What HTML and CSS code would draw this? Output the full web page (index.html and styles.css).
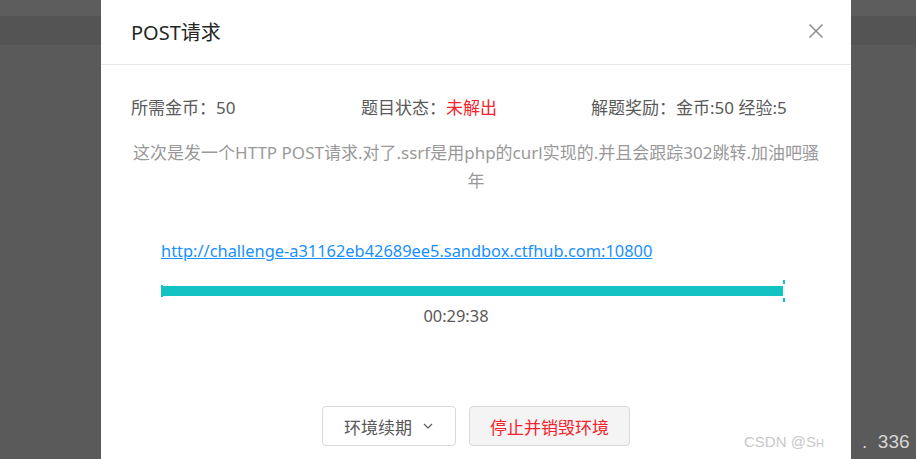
FILE: index.html
```html
<!DOCTYPE html>
<html lang="zh-CN">
<head>
    <meta charset="UTF-8">
    <meta name="viewport" content="width=device-width, initial-scale=1.0">
    <title>POST请求</title>
    <link rel="stylesheet" href="styles.css">
</head>
<body>
    <div class="page-bg">
        <div class="page-top"></div>
        <div class="page-bar"></div>
    </div>

    <div class="modal">
        <div class="modal-header">
            <span class="modal-title">POST请求</span>
            <span class="modal-close">
                <svg width="16" height="16" viewBox="0 0 16 16"><path d="M1.5 1.5 L14.5 14.5 M14.5 1.5 L1.5 14.5" stroke="#8c8c8c" stroke-width="1.5" fill="none"/></svg>
            </span>
        </div>
        <div class="modal-body">
            <div class="info-row">
                <div class="info-item">所需金币：50</div>
                <div class="info-item">题目状态：<span class="status-red">未解出</span></div>
                <div class="info-item">解题奖励：金币:50 经验:5</div>
            </div>
            <p class="desc">这次是发一个HTTP POST请求.对了.ssrf是用php的curl实现的.并且会跟踪302跳转.加油吧骚年</p>
            <div class="env">
                <a class="env-link" href="#">http://challenge-a31162eb42689ee5.sandbox.ctfhub.com:10800</a>
                <div class="progress">
                    <div class="progress-fill" style="width: 99.6%"></div>
                </div>
                <div class="timer">00:29:38</div>
            </div>
            <div class="actions">
                <button class="btn btn-renew">环境续期
                    <svg width="12" height="12" viewBox="0 0 12 12"><path d="M2 4 L6 8 L10 4" stroke="#595959" stroke-width="1.2" fill="none"/></svg>
                </button>
                <button class="btn btn-stop">停止并销毁环境</button>
            </div>
        </div>
    </div>

    <div class="watermark">CSDN @S<span class="small-caps">H</span></div>
    <div class="corner-text">.&nbsp;&nbsp;336</div>
</body>
</html>
```

FILE: styles.css
```css
* {
    margin: 0;
    padding: 0;
    box-sizing: border-box;
}

body {
    font-family: "Noto Sans", "Noto Sans CJK SC", sans-serif;
    background-color: #5a5a5a;
    height: 459px;
    overflow: hidden;
    position: relative;
}

.page-top {
    height: 16px;
    background-color: #5d5d5d;
}

.page-bar {
    height: 30px;
    background-color: #545454;
    border-bottom: 1px solid #5c5c5c;
}

.modal {
    position: absolute;
    left: 101px;
    top: 0;
    width: 750px;
    height: 480px;
    background-color: #fff;
}

.modal-header {
    height: 65px;
    padding: 0 27px 0 30px;
    border-bottom: 1px solid #e8e8e8;
    display: flex;
    align-items: center;
    justify-content: space-between;
}

.modal-title {
    font-size: 20px;
    color: #262626;
    font-weight: 400;
    margin-top: -2px;
}

.modal-close {
    display: flex;
    margin-top: -2px;
}

.modal-body {
    padding: 31px 30px 0 30px;
}

.info-row {
    display: flex;
    font-size: 17px;
    line-height: 24px;
    color: #595959;
}

.info-item {
    width: 230px;
}

.status-red {
    color: #f5222d;
}

.desc {
    margin-top: 19px;
    font-size: 17px;
    line-height: 28px;
    color: #999;
    text-align: center;
}

.env {
    padding: 0 36px 0 30px;
    margin-top: 44px;
}

.env-link {
    display: inline-block;
    font-size: 16.4px;
    line-height: 24px;
    color: #1890ff;
    text-decoration: underline;
}

.progress {
    margin-top: 23px;
    height: 10px;
    background-color: #f2f2f2;
    position: relative;
}

.progress-fill {
    height: 100%;
    background-color: #13c2c2;
}

.progress::before,
.progress::after {
    content: "";
    position: absolute;
    width: 2px;
    background-color: #13c2c2;
}

.progress::before {
    left: 0;
    top: -1px;
    height: 12px;
}

.progress::after {
    right: 0;
    top: -6px;
    height: 22px;
    background: linear-gradient(#13c2c2 0 4px, transparent 4px 18px, #13c2c2 18px);
}

.timer {
    margin-top: 8px;
    padding-right: 34px;
    text-align: center;
    font-size: 16.4px;
    line-height: 24px;
    color: #595959;
}

.actions {
    margin-top: 78px;
    display: flex;
    justify-content: center;
    gap: 13px;
}

.btn {
    height: 40px;
    font-family: inherit;
    font-size: 17px;
    border: 1px solid #d9d9d9;
    border-radius: 4px;
    cursor: pointer;
    display: flex;
    align-items: center;
    justify-content: center;
}

.btn-renew {
    width: 134px;
    background-color: #fff;
    color: #595959;
    gap: 10px;
}

.btn-stop {
    width: 161px;
    background-color: #f4f4f4;
    color: #f5222d;
}

.watermark {
    position: absolute;
    left: 744px;
    top: 433px;
    font-family: "Liberation Sans", Arial, sans-serif;
    font-size: 15px;
    color: #c8c8c8;
}

.small-caps {
    font-size: 11px;
}

.corner-text {
    position: absolute;
    left: 862px;
    top: 431px;
    font-family: "Liberation Sans", Arial, sans-serif;
    font-size: 19px;
    color: #d6d6d6;
}
```
